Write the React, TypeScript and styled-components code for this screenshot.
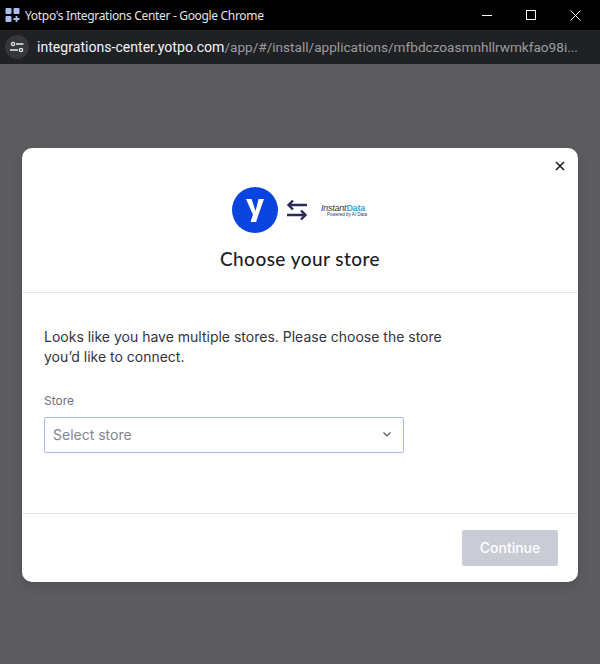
import React from "react";
import styled, { createGlobalStyle } from "styled-components";

const Global = createGlobalStyle`
  html, body { margin: 0; padding: 0; background: #5d5d61; }
  #root { width: 600px; height: 664px; }
  * { box-sizing: border-box; }
`;

const Page = styled.div`
  width: 600px;
  height: 664px;
  display: flex;
  flex-direction: column;
  overflow: hidden;
  background: #5d5d61;
`;

const TitleBar = styled.div`
  height: 30px;
  flex: none;
  background: #000;
  display: flex;
  align-items: center;
  padding-left: 5px;
  color: #e4e4e4;
  font: 12px "Noto Sans", "Open Sans", sans-serif;
  letter-spacing: -0.32px;
`;

const TitleText = styled.span`
  margin-left: 4px;
  flex: 1;
  white-space: nowrap;
`;

const WindowButtons = styled.div`
  display: flex;
  align-items: center;
  gap: 34px;
  padding-right: 19px;
`;

const AddressBar = styled.div`
  height: 34px;
  flex: none;
  background: #202124;
  display: flex;
  align-items: center;
  padding-left: 5px;
`;

const SiteChip = styled.div`
  width: 24px;
  height: 24px;
  border-radius: 50%;
  background: #36373a;
  display: flex;
  align-items: center;
  justify-content: center;
  flex: none;
`;

const Url = styled.div`
  margin-left: 8px;
  font: 13.6px Roboto, "Liberation Sans", sans-serif;
  color: #9b9ca0;
  white-space: nowrap;
`;

const Host = styled.span`
  color: #f1f3f4;
  font-size: 14.1px;
`;

const Stage = styled.div`
  flex: 1;
  display: flex;
  justify-content: center;
  padding-top: 84px;
`;

const Modal = styled.div`
  width: 556px;
  height: 434px;
  background: #fff;
  border-radius: 10px;
  box-shadow: 0 4px 14px rgba(0, 0, 0, 0.14);
  display: flex;
  flex-direction: column;
  position: relative;
  font-family: Inter, "Liberation Sans", sans-serif;
`;

const CloseButton = styled.button`
  position: absolute;
  top: 12px;
  right: 12px;
  width: 12px;
  height: 12px;
  padding: 0;
  border: 0;
  background: none;
  display: flex;
`;

const Header = styled.header`
  height: 145px;
  flex: none;
  border-bottom: 1px solid #e6e6e8;
  display: flex;
  flex-direction: column;
  align-items: center;
  padding-top: 39px;
`;

const Logos = styled.div`
  display: flex;
  align-items: center;
  height: 46px;
  margin-left: -2px;
`;

const ArrowSlot = styled.div`
  margin-left: 8px;
  display: flex;
`;

const Partner = styled.div`
  margin-left: 12px;
  width: 46px;
  display: flex;
  flex-direction: column;
  align-items: center;
  line-height: 1;
`;

const PartnerName = styled.div`
  font: italic 9px "Liberation Sans", sans-serif;
  letter-spacing: -0.25px;
  color: #34343c;
  white-space: nowrap;
  line-height: 8px;
`;

const PartnerAccent = styled.span`
  color: #33a6dc;
  font-style: normal;
  font-weight: 700;
`;

const PartnerTag = styled.div`
  font: 4.500px "Liberation Sans", sans-serif;
  color: #2d2f7a;
  white-space: nowrap;
  line-height: 5px;
  margin-left: 8px;
`;

const Title = styled.h1`
  margin: 13px 0 0;
  font-size: 19px;
  line-height: 26px;
  font-weight: 500;
  font-family: Lato, Inter, sans-serif;
  letter-spacing: 0.45px;
  color: #1c1d27;
`;

const Body = styled.main`
  flex: 1;
  padding: 34px 22px 0;
`;

const Intro = styled.p`
  margin: 0;
  width: 420px;
  font-size: 14px;
  line-height: 20px;
  color: #33343d;
`;

const FieldLabel = styled.label`
  display: block;
  margin-top: 26px;
  font-size: 12px;
  line-height: 16px;
  color: #70717c;
`;

const Select = styled.div`
  margin-top: 8px;
  width: 360px;
  height: 36px;
  border: 1px solid #a9b8ec;
  border-radius: 2px;
  display: flex;
  align-items: center;
  justify-content: space-between;
  padding: 0 12px 1px 8px;
  font-size: 14px;
  color: #83848f;
`;

const Footer = styled.footer`
  height: 69px;
  flex: none;
  border-top: 1px solid #e6e6e8;
  display: flex;
  justify-content: flex-end;
  align-items: flex-start;
  padding: 16px 20px 0 0;
`;

const ContinueButton = styled.button`
  width: 96px;
  height: 36px;
  border: 0;
  border-radius: 2px;
  padding: 0 0 1px;
  background: #c9ccd5;
  color: #fff;
  font: 500 14px Inter, "Liberation Sans", sans-serif;
`;

export default function App() {
  return (
    <Page>
      <Global />
      <TitleBar>
        <svg width="16" height="16" viewBox="0 0 16 16">
          <rect x="0.5" y="1" width="6" height="6" rx="1" fill="#a9bdf0" />
          <rect x="8.5" y="1" width="6" height="6" rx="1" fill="#a9bdf0" />
          <rect x="0.5" y="9" width="6" height="6" rx="1" fill="#a9bdf0" />
          <path d="M11.5 9v6M8.5 12h6" stroke="#a9bdf0" strokeWidth="1.8" />
        </svg>
        <TitleText>Yotpo's Integrations Center - Google Chrome</TitleText>
        <WindowButtons>
          <svg width="10" height="10" viewBox="0 0 10 10">
            <path d="M0 5.5h10" stroke="#fff" strokeWidth="1" />
          </svg>
          <svg width="10" height="10" viewBox="0 0 10 10">
            <rect x="0.5" y="0.5" width="9" height="9" fill="none" stroke="#fff" strokeWidth="1" />
          </svg>
          <svg width="11" height="11" viewBox="0 0 11 11">
            <path d="M0.5 0.5l10 10M10.5 0.5l-10 10" stroke="#fff" strokeWidth="1" />
          </svg>
        </WindowButtons>
      </TitleBar>
      <AddressBar>
        <SiteChip>
          <svg width="14" height="12" viewBox="0 0 14 12" fill="none" stroke="#e8eaed" strokeWidth="1.3">
            <circle cx="3" cy="3" r="1.6" />
            <path d="M6 3h7.5M0 9h8" />
            <circle cx="11" cy="9" r="1.6" />
          </svg>
        </SiteChip>
        <Url>
          <Host>integrations-center.yotpo.com</Host>/app/#/install/applications/mfbdczoasmnhllrwmkfao98i...
        </Url>
      </AddressBar>
      <Stage>
        <Modal>
          <CloseButton aria-label="Close">
            <svg width="12" height="12" viewBox="0 0 12 12">
              <path d="M2 2l8 8M10 2l-8 8" stroke="#1c1d27" strokeWidth="1.6" />
            </svg>
          </CloseButton>
          <Header>
            <Logos>
              <svg width="46" height="46" viewBox="0 0 46 46">
                <circle cx="23" cy="23" r="23" fill="#0a44e0" />
                <path d="M14 12h5.600L23.500 24 26.600 12H32L26 29c-.8 2.300-1.200 4-1.800 6h-5.600l2.300-7.500z" fill="#fff" />
              </svg>
              <ArrowSlot>
                <svg width="22" height="24" viewBox="0 0 22 24" fill="none" stroke="#2a2b57" strokeWidth="2.4">
                  <path d="M21 7H3M7 2.500L2.500 7 7 11.500" />
                  <path d="M1 17h18M15 12.500L19.500 17 15 21.500" />
                </svg>
              </ArrowSlot>
              <Partner>
                <PartnerName>
                  Instant<PartnerAccent>Data</PartnerAccent>
                </PartnerName>
                <PartnerTag>Powered by AI Data</PartnerTag>
              </Partner>
            </Logos>
            <Title>Choose your store</Title>
          </Header>
          <Body>
            <Intro>Looks like you have multiple stores. Please choose the store you’d like to connect.</Intro>
            <FieldLabel>Store</FieldLabel>
            <Select>
              Select store
              <svg width="8" height="5" viewBox="0 0 8 5" fill="none" stroke="#55565f" strokeWidth="1.2">
                <path d="M0.500 0.500L4 4l3.500-3.500" />
              </svg>
            </Select>
          </Body>
          <Footer>
            <ContinueButton disabled>Continue</ContinueButton>
          </Footer>
        </Modal>
      </Stage>
    </Page>
  );
}
